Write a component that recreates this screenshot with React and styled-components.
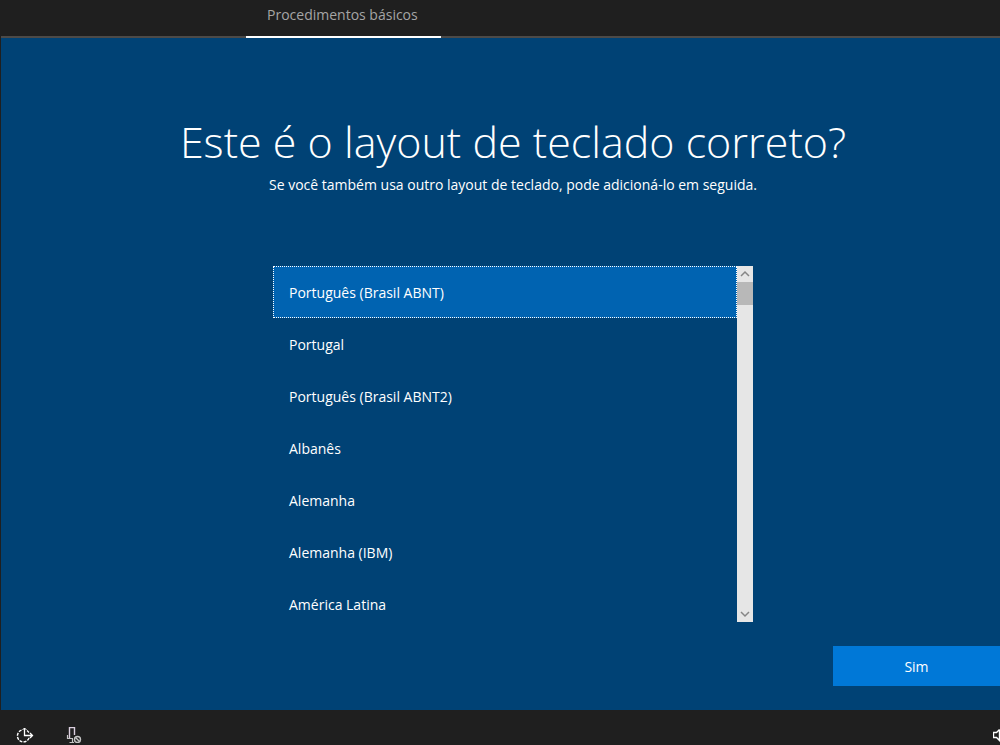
import React, { useState } from 'react';
import styled, { createGlobalStyle } from 'styled-components';

const layouts = [
  'Português (Brasil ABNT)',
  'Portugal',
  'Português (Brasil ABNT2)',
  'Albanês',
  'Alemanha',
  'Alemanha (IBM)',
  'América Latina',
];

export default function App() {
  const [selected, setSelected] = useState(layouts[0]);

  return (
    <>
      <GlobalStyle />
      <Screen>
        <Header>
          <Tab href="#basics">Procedimentos básicos</Tab>
        </Header>
        <Main>
          <Title>Este é o layout de teclado correto?</Title>
          <Subtitle>
            Se você também usa outro layout de teclado, pode adicioná-lo em
            seguida.
          </Subtitle>
          <Picker>
            <List role="radiogroup" aria-label="Layout de teclado">
              {layouts.map((layout) => (
                <Item key={layout} $selected={layout === selected}>
                  <input
                    type="radio"
                    name="layout"
                    checked={layout === selected}
                    onChange={() => setSelected(layout)}
                  />
                  {layout}
                </Item>
              ))}
            </List>
            <Scrollbar>
              <ScrollButton aria-label="Rolar para cima">
                <Chevron d="M4 10 L8 6 L12 10" />
              </ScrollButton>
              <Thumb />
              <ScrollButton aria-label="Rolar para baixo">
                <Chevron d="M4 6 L8 10 L12 6" />
              </ScrollButton>
            </Scrollbar>
          </Picker>
          <Confirm>Sim</Confirm>
        </Main>
        <Footer>
          <IconButton aria-label="Facilidade de acesso">
            <AccessIcon />
          </IconButton>
          <IconButton aria-label="Microfone">
            <MicIcon />
          </IconButton>
          <VolumeButton aria-label="Volume">
            <VolumeIcon />
          </VolumeButton>
        </Footer>
      </Screen>
    </>
  );
}

const Chevron = ({ d }) => (
  <svg width="16" height="16" viewBox="0 0 16 16" fill="none">
    <path d={d} stroke="#868686" strokeWidth="1.5" />
  </svg>
);

const AccessIcon = () => (
  <svg width="18" height="16" viewBox="0 0 18 16" fill="none" stroke="#fff">
    <path
      d="M5.5 3.2 A6 6 0 1 0 13.2 10.5"
      strokeWidth="1.4"
      strokeDasharray="3 1.2"
    />
    <path d="M8.5 1 V8.5 H16 M14 6 L16.5 8.5 L14 11" strokeWidth="1.3" />
    <path d="M6.5 3 L8.5 1 L10.5 3" strokeWidth="1" />
    <path d="M11 3.5 L13 5.5" strokeWidth="1.2" />
  </svg>
);

const MicIcon = () => (
  <svg width="18" height="16" viewBox="0 0 18 16" fill="none">
    <path d="M3.5 11.5 V0.5 H8.5 V8" stroke="#dccfe0" strokeWidth="1.4" />
    <path
      d="M1.5 8 V11.5 H7 M6.5 12 V15.5 M3.5 15.5 H8"
      stroke="#c4c4c4"
      strokeWidth="1.2"
    />
    <circle cx="11.5" cy="12.5" r="3" stroke="#c4c4c4" strokeWidth="1.4" />
    <path d="M9.5 10.5 L13.5 14.5" stroke="#c4c4c4" strokeWidth="1.4" />
  </svg>
);

const VolumeIcon = () => (
  <svg width="7" height="16" viewBox="0 0 7 16" fill="none" stroke="#fff">
    <path d="M6.5 2.5 V13.5 L3.5 10.5 H0.5 V5.5 H3.5 L6.5 2.5" strokeWidth="1.4" />
  </svg>
);

const GlobalStyle = createGlobalStyle`
  * {
    box-sizing: border-box;
  }

  body {
    margin: 0;
    background-color: #1f1f1f;
    color: #fff;
    font-family: 'Open Sans', 'Noto Sans', sans-serif;
    font-size: 14px;
    line-height: 20px;
  }

  button {
    border: none;
    padding: 0;
    color: inherit;
    font: inherit;
    cursor: pointer;
  }

  svg {
    display: block;
  }
`;

const Screen = styled.div`
  display: flex;
  flex-direction: column;
  min-height: 100vh;
  padding-left: 1px;
  overflow: hidden;
`;

const Header = styled.header`
  display: flex;
  height: 38px;
  padding-left: 245px;
  box-shadow: inset 0 -2px #4c4a48;
`;

const Tab = styled.a`
  min-width: 195px;
  padding: 5px 21px 0;
  border-bottom: 2px solid #fff;
  color: #a5a5a5;
  text-decoration: none;
`;

const Main = styled.main`
  display: flex;
  flex: 1;
  flex-direction: column;
  align-items: center;
  padding: 74px 0 24px 25px;
  background-color: #004275;
`;

const Title = styled.h1`
  margin: 0;
  font-size: 43px;
  font-weight: 300;
  line-height: 60px;
`;

const Subtitle = styled.p`
  margin: 3px 0 0;
`;

const Picker = styled.div`
  display: flex;
  width: 480px;
  height: 356px;
  margin-top: 71px;
`;

const List = styled.div`
  flex: 1;
  overflow: hidden;
`;

const Item = styled.label`
  display: flex;
  align-items: center;
  height: 52px;
  padding: 2px 15px 0;
  border: 1px dotted ${({ $selected }) => ($selected ? '#fff' : 'transparent')};
  background-color: ${({ $selected }) => ($selected ? '#0063b1' : 'transparent')};
  cursor: pointer;

  input {
    appearance: none;
    width: 0;
    margin: 0;
    outline: none;
  }
`;

const Scrollbar = styled.div`
  display: flex;
  flex-direction: column;
  width: 16px;
  background-color: #e6e6e6;
`;

const ScrollButton = styled.button`
  height: 16px;
  background: none;

  &:last-child {
    margin-top: auto;
  }
`;

const Thumb = styled.div`
  height: 23px;
  background-color: #b8b8b8;
`;

const Confirm = styled.button`
  align-self: flex-end;
  width: 167px;
  height: 40px;
  margin-top: 24px;
  padding-top: 2px;
  background-color: #0078d7;
`;

const Footer = styled.footer`
  display: flex;
  gap: 32px;
  height: 35px;
  padding: 17px 0 0 15px;
`;

const IconButton = styled.button`
  height: 16px;
  background: none;
`;

const VolumeButton = styled(IconButton)`
  margin-left: auto;
`;
